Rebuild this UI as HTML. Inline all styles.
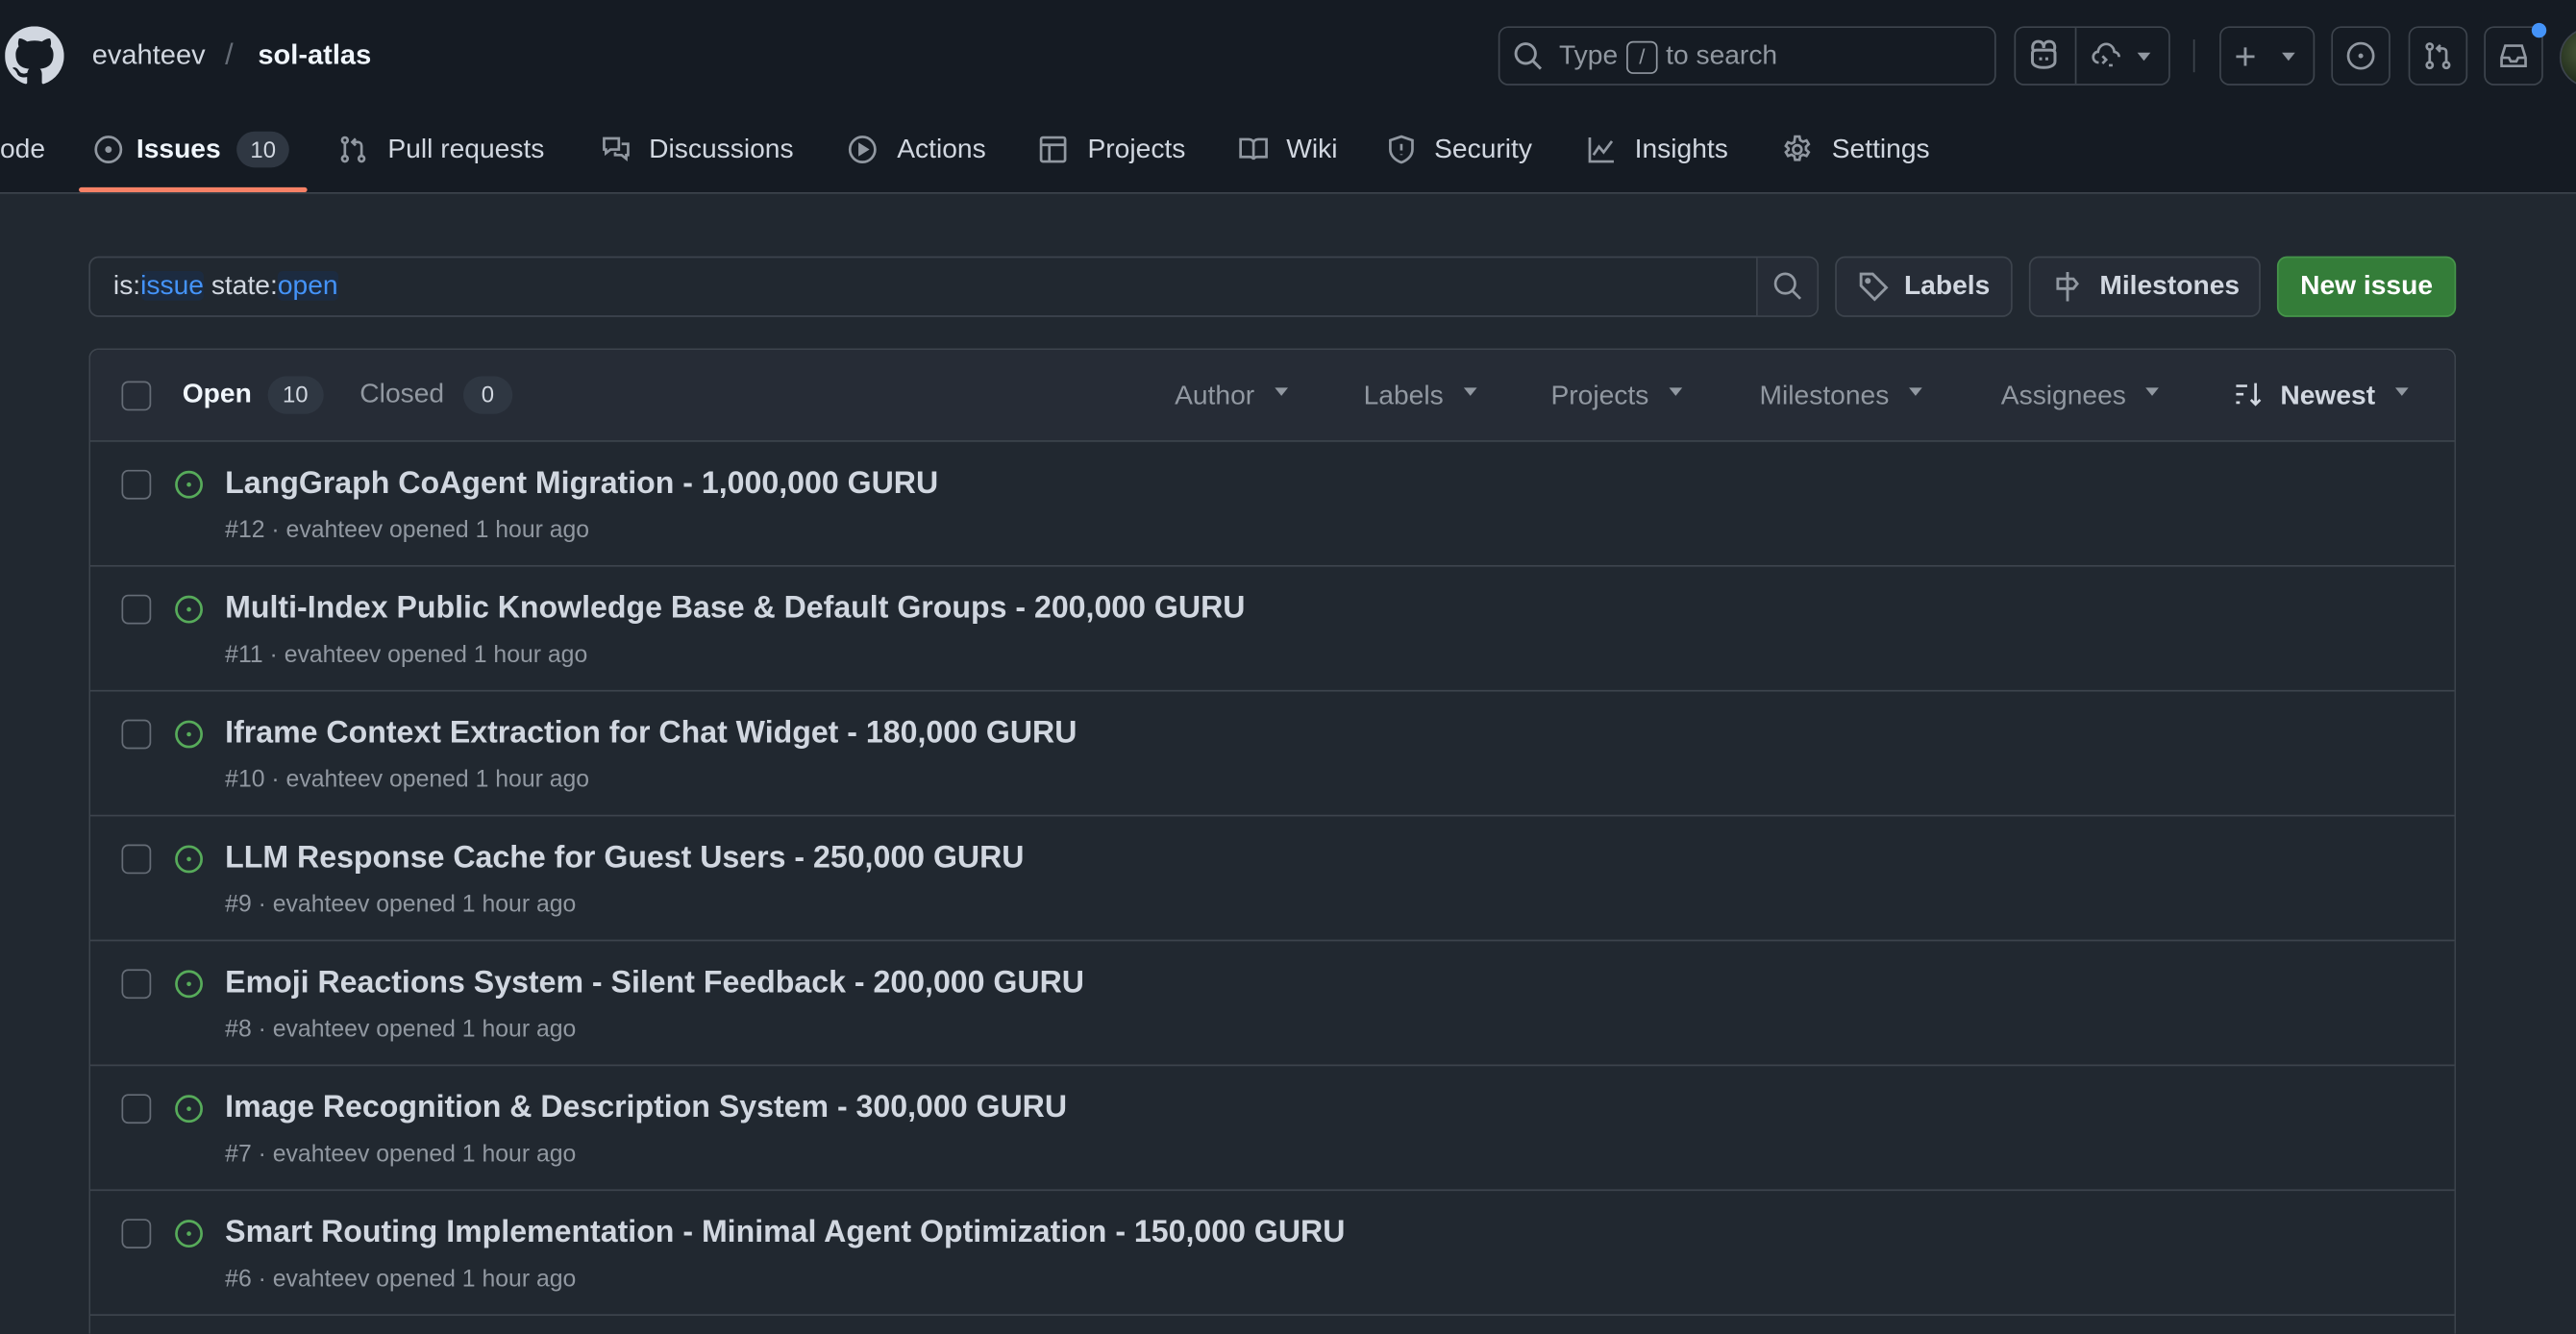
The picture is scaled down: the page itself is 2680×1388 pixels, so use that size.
<!DOCTYPE html>
<html><head><meta charset="utf-8"><style>
*{box-sizing:border-box;margin:0;padding:0}
html,body{width:2680px;height:1388px;overflow:hidden;background:#212830}
#w{position:absolute;left:0;top:0;width:1568px;height:812px;overflow:hidden;transform:scale(1.70918);transform-origin:0 0;font-family:"Liberation Sans",sans-serif;color:#d1d7e0;background:#212830}
.a{position:absolute}
svg{display:block}
.hdr{position:absolute;left:0;top:0;width:1568px;height:118px;background:#151b23;border-bottom:1px solid #3d444d}
.btn{position:absolute;border:1px solid #3d444d;border-radius:6px}
.tab{position:absolute;top:79px;height:24px;font-size:16.5px;line-height:24px;color:#d1d7e0;display:flex;align-items:center;gap:8px}
.tab svg{stroke:#9198a1;fill:none;stroke-width:1.4}
.dd{position:absolute;top:230px;font-size:16.5px;color:#9198a1;line-height:22px}
.dd:after{content:"";display:inline-block;margin-left:12px;border:4.5px solid transparent;border-top:5px solid #9198a1;vertical-align:1px}
.row{position:absolute;left:55px;width:1439px;height:76px;border-top:1px solid #3d444d}
.cb{position:absolute;left:19px;width:18px;height:18px;border:1.3px solid #656c76;border-radius:4px}
.row .cb{top:17px}
.row .ic{position:absolute;left:51px;top:17px}
.row .t{position:absolute;left:82px;top:14px;font-size:18.8px;font-weight:bold;color:#d1d7e0;white-space:nowrap}
.row .m{position:absolute;left:82px;top:46px;font-size:14.5px;color:#9198a1;white-space:nowrap}
</style></head><body><div id="w">
<div class="hdr"></div>
<svg class="a" style="left:3px;top:16px" width="36" height="36" viewBox="0 0 16 16"><path fill="#d1d7e0" d="M8 0C3.58 0 0 3.58 0 8c0 3.54 2.29 6.53 5.47 7.59.4.07.55-.17.55-.38 0-.19-.01-.82-.01-1.49-2.01.37-2.53-.49-2.69-.94-.09-.23-.48-.94-.82-1.13-.28-.15-.68-.52-.01-.53.63-.01 1.08.58 1.23.82.72 1.21 1.870.87 2.33.66.07-.52.28-.87.51-1.07-1.78-.2-3.64-.89-3.64-3.95 0-.87.31-1.59.82-2.15-.08-.2-.36-1.020.08-2.12 0 0 .67-.21 2.2.82.64-.18 1.32-.27 2-.27.68 0 1.36.09 2 .27 1.53-1.04 2.2-.82 2.2-.82.44 1.1.16 1.92.08 2.12.51.56.82 1.27.82 2.15 0 3.07-1.87 3.75-3.65 3.95.29.25.54.73.54 1.48 0 1.07-.01 1.93-.01 2.2 0 .21.15.46.55.38A8.013 8.013 0 0016 8c0-4.42-3.58-8-8-8z"/></svg>
<div class="a" style="left:56px;top:24px;font-size:17px;color:#d1d7e0">evahteev</div>
<div class="a" style="left:137px;top:23px;font-size:18px;color:#656c76">/</div>
<div class="a" style="left:157px;top:24px;font-size:17px;font-weight:bold;color:#f0f6fc">sol-atlas</div>
<div class="btn" style="left:912px;top:16px;width:303px;height:36px;background:#151b23"></div>
<svg class="a" style="left:921px;top:25px" width="18" height="18" viewBox="0 0 16 16" fill="none" stroke="#9198a1" stroke-width="1.5"><circle cx="6.8" cy="6.8" r="5.3"/><path d="M10.7 10.7L15 15"/></svg>
<div class="a" style="left:949px;top:25px;font-size:16.5px;color:#9198a1">Type</div>
<div class="a" style="left:990px;top:25px;width:19px;height:20px;border:1px solid #9198a1;border-radius:4px;font-size:13px;color:#9198a1;text-align:center;line-height:18px">/</div>
<div class="a" style="left:1014px;top:25px;font-size:16.5px;color:#9198a1">to search</div>
<div class="btn" style="left:1226px;top:16px;width:95px;height:36px"></div>
<div class="a" style="left:1263px;top:17px;width:1px;height:34px;background:#3d444d"></div>
<svg class="a" style="left:1234px;top:23px" width="20" height="20" viewBox="0 0 16 16" fill="none" stroke="#9198a1" stroke-width="1.4"><path d="M3 6.5C2 4 3 1.8 5.3 1.8S8 3.5 8 5c0-1.5.4-3.2 2.7-3.2S14 4 13 6.5M2.5 7.5v4c0 2 2.5 3 5.5 3s5.5-1 5.5-3v-4c0-1-1-1.5-2-1.5H4.5c-1 0-2 .5-2 1.5z"/><path d="M6.5 9.5v1.5M9.5 9.5v1.5"/></svg>
<svg class="a" style="left:1272px;top:24px" width="20" height="18" viewBox="0 0 16 16" fill="none" stroke="#9198a1" stroke-width="1.4"><path d="M4 12.5C2 12.5 1 11 1 9.5S2.2 6.7 3.6 6.7C4 4 6 2.5 8 2.5c2.5 0 4.2 2 4.4 4.2 1.5.2 2.6 1.3 2.6 2.8"/><path d="M6 9l2 2-2 2M9.5 14h2"/></svg>
<div class="a" style="left:1301px;top:32px;border:4.5px solid transparent;border-top:5px solid #9198a1"></div>
<div class="a" style="left:1335px;top:24px;width:1px;height:20px;background:#3d444d"></div>
<div class="btn" style="left:1351px;top:16px;width:58px;height:36px"></div>
<div class="a" style="left:1360px;top:21px;font-size:23px;color:#9198a1;line-height:26px">+</div>
<div class="a" style="left:1389px;top:32px;border:4.5px solid transparent;border-top:5px solid #9198a1"></div>
<div class="btn" style="left:1419px;top:16px;width:36px;height:36px"></div>
<svg class="a" style="left:1428px;top:25px" width="18" height="18" viewBox="0 0 16 16"><circle cx="8" cy="8" r="6.8" fill="none" stroke="#9198a1" stroke-width="1.4"/><circle cx="8" cy="8" r="1.3" fill="#9198a1"/></svg>
<div class="btn" style="left:1466px;top:16px;width:36px;height:36px"></div>
<svg class="a" style="left:1475px;top:25px" width="18" height="18" viewBox="0 0 16 16" fill="none" stroke="#9198a1" stroke-width="1.4"><circle cx="3.5" cy="3" r="1.6"/><circle cx="3.5" cy="13" r="1.6"/><circle cx="12.5" cy="13" r="1.6"/><path d="M3.5 4.6v6.8M12.5 11.4V6c0-1.2-.8-2-2-2H7.5M9.3 2.2L7.5 4l1.8 1.8"/></svg>
<div class="btn" style="left:1512px;top:16px;width:36px;height:36px"></div>
<svg class="a" style="left:1521px;top:25px" width="18" height="18" viewBox="0 0 16 16" fill="none" stroke="#9198a1" stroke-width="1.4"><path d="M1.5 9l2-6.5h9l2 6.5v4.5h-13zM1.5 9h4l1 2h3l1-2h4"/></svg>
<div class="a" style="left:1541px;top:14px;width:9px;height:9px;border-radius:50%;background:#4493f8"></div>
<div class="a" style="left:1558px;top:17px;width:36px;height:36px;border-radius:50%;background:radial-gradient(circle at 40% 40%,#4a5a3a,#1e2a1a 70%);border:1px solid #3d444d"></div>
<div class="tab" style="left:0">ode</div>
<div class="tab" style="left:57px"><svg width="18" height="18" viewBox="0 0 16 16"><circle cx="8" cy="8" r="6.8"/><circle cx="8" cy="8" r="1.1" fill="#9198a1"/></svg><b style="color:#f0f6fc;font-weight:bold">Issues</b><span style="display:inline-block;background:#2f3742;border-radius:12px;padding:0 8px;font-size:14px;line-height:22px;margin-left:2px">10</span></div>
<div class="a" style="left:48px;top:114px;width:139px;height:3px;border-radius:2px;background:#f78166"></div>
<div class="tab" style="left:206px"><svg width="18" height="18" viewBox="0 0 16 16"><circle cx="3.5" cy="3" r="1.5"/><circle cx="3.5" cy="13" r="1.5"/><circle cx="12.5" cy="13" r="1.5"/><path d="M3.5 4.5v7M12.5 11.5V6c0-1.2-.8-2-2-2H7.5M9.3 2.2L7.5 4l1.8 1.8"/></svg><span style="margin-left:4px">Pull requests</span></div>
<div class="tab" style="left:365px"><svg width="20" height="18" viewBox="0 0 16 16"><path d="M1.5 2h8v6H5L2.5 10V8h-1zM11 5h3.5v6h-1v2L11 11H7.5V9.5"/></svg><span style="margin-left:2px">Discussions</span></div>
<div class="tab" style="left:516px"><svg width="18" height="18" viewBox="0 0 16 16"><circle cx="8" cy="8" r="6.8"/><path d="M6.5 5.5v5l4-2.5z" fill="#9198a1"/></svg><span style="margin-left:4px">Actions</span></div>
<div class="tab" style="left:632px"><svg width="18" height="18" viewBox="0 0 16 16"><rect x="1.5" y="1.5" width="13" height="13" rx="1"/><path d="M1.5 5.5h13M6 5.5v9"/></svg><span style="margin-left:4px">Projects</span></div>
<div class="tab" style="left:753px"><svg width="20" height="18" viewBox="0 0 16 16"><path d="M1 2.5h4.5c1.3 0 2.5.8 2.5 2v9c0-.8-1-1.5-2-1.5H1zM15 2.5h-4.5C9.2 2.5 8 3.3 8 4.5v9c0-.8 1-1.5 2-1.5h5z"/></svg><span style="margin-left:2px">Wiki</span></div>
<div class="tab" style="left:844px"><svg width="18" height="18" viewBox="0 0 16 16"><path d="M8 1l6 2v5c0 3.5-3 6-6 7-3-1-6-3.5-6-7V3z"/><path d="M8 5v3.5M8 10.5v.5"/></svg><span style="margin-left:3px">Security</span></div>
<div class="tab" style="left:965px"><svg width="20" height="18" viewBox="0 0 16 16"><path d="M1.5 1.5v13h13M3.5 11l3-4.5 2.5 3 4.5-6"/></svg><span style="margin-left:2px">Insights</span></div>
<div class="tab" style="left:1085px"><svg width="18" height="18" viewBox="0 0 16 16"><circle cx="8" cy="8" r="2.3"/><path d="M6.8 1h2.4l.4 2 1.5.8 1.9-.7 1.2 2-1.5 1.4v1.6l1.5 1.4-1.2 2-1.9-.7-1.5.8-.4 2H6.8l-.4-2-1.5-.8-1.9.7-1.2-2 1.5-1.4V7.5L1.8 6.1l1.2-2 1.9.7 1.5-.8z"/></svg><span style="margin-left:4px">Settings</span></div>
<div class="btn" style="left:54px;top:156px;width:1053px;height:37px;background:#212830"></div>
<div class="a" style="left:1069px;top:157px;width:1px;height:35px;background:#3d444d"></div>
<div class="a" style="left:1070px;top:157px;width:36px;height:35px;background:#262c36;border-radius:0 6px 6px 0"></div>
<svg class="a" style="left:1079px;top:165px" width="18" height="18" viewBox="0 0 16 16" fill="none" stroke="#9198a1" stroke-width="1.4"><circle cx="6.8" cy="6.8" r="5.3"/><path d="M10.7 10.7L15 15"/></svg>
<div class="a" style="left:69px;top:165px;font-size:16.5px;color:#d1d7e0;white-space:nowrap">is:<span style="color:#4493f8;background:#1c2b40;border-radius:3px">issue</span> state:<span style="color:#4493f8;background:#1c2b40;border-radius:3px">open</span></div>
<div class="btn" style="left:1117px;top:156px;width:108px;height:37px;background:#262c36"></div>
<svg class="a" style="left:1131px;top:165px" width="19" height="19" viewBox="0 0 16 16" fill="none" stroke="#9198a1" stroke-width="1.4"><path d="M1.5 1.5h6l7 7-6 6-7-7z"/><circle cx="5" cy="5" r=".8" fill="#9198a1"/></svg>
<div class="a" style="left:1159px;top:165px;font-size:16.5px;font-weight:bold;color:#d1d7e0">Labels</div>
<div class="btn" style="left:1235px;top:156px;width:141px;height:37px;background:#262c36"></div>
<svg class="a" style="left:1249px;top:165px" width="19" height="19" viewBox="0 0 16 16" fill="none" stroke="#9198a1" stroke-width="1.4"><path d="M8 .5v15M3 4h8l2 2.5-2 2.5H3z"/></svg>
<div class="a" style="left:1278px;top:165px;font-size:16.5px;font-weight:bold;color:#d1d7e0">Milestones</div>
<div class="a" style="left:1386px;top:156px;width:109px;height:37px;background:#347d39;border:1px solid #46954a;border-radius:6px;color:#fff;font-size:16.5px;font-weight:bold;text-align:center;line-height:35px">New issue</div>
<div class="a" style="left:54px;top:212px;width:1441px;height:600px;border:1px solid #3d444d;border-bottom:none;border-radius:6px 6px 0 0;background:#212830"></div>
<div class="a" style="left:55px;top:213px;width:1439px;height:55px;background:#262c36;border-radius:6px 6px 0 0"></div>
<div class="cb" style="left:74px;top:232px"></div>
<div class="a" style="left:111px;top:231px;font-size:16.5px;font-weight:bold;color:#f0f6fc">Open</div>
<div class="a" style="left:163px;top:229px;height:23px;padding:0 9px;background:#2f3742;border-radius:12px;font-size:14px;line-height:23px;color:#d1d7e0">10</div>
<div class="a" style="left:219px;top:231px;font-size:16.5px;color:#9198a1">Closed</div>
<div class="a" style="left:282px;top:229px;height:23px;padding:0 11px;background:#2f3742;border-radius:12px;font-size:14px;line-height:23px;color:#d1d7e0">0</div>
<div class="dd" style="left:715px">Author</div>
<div class="dd" style="left:830px">Labels</div>
<div class="dd" style="left:944px">Projects</div>
<div class="dd" style="left:1071px">Milestones</div>
<div class="dd" style="left:1218px">Assignees</div>
<svg class="a" style="left:1359px;top:231px" width="20" height="18" viewBox="0 0 16 16" fill="none" stroke="#d1d7e0" stroke-width="1.4"><path d="M1 3.5h6M1 8h4M1 12.5h2M11.5 2v11.5M9 11l2.5 2.5L14 11"/></svg>
<div class="dd" style="left:1388px;color:#d1d7e0;font-weight:bold">Newest</div>

<div class="row" style="top:268px"><div class="cb"></div><svg class="ic" width="18" height="18" viewBox="0 0 16 16"><circle cx="8" cy="8" r="6.8" fill="none" stroke="#57ab5a" stroke-width="1.4"/><circle cx="8" cy="8" r="1.2" fill="#57ab5a"/></svg><div class="t">LangGraph CoAgent Migration - 1,000,000 GURU</div><div class="m">#12 · evahteev opened 1 hour ago</div></div>
<div class="row" style="top:344px"><div class="cb"></div><svg class="ic" width="18" height="18" viewBox="0 0 16 16"><circle cx="8" cy="8" r="6.8" fill="none" stroke="#57ab5a" stroke-width="1.4"/><circle cx="8" cy="8" r="1.2" fill="#57ab5a"/></svg><div class="t">Multi-Index Public Knowledge Base &amp; Default Groups - 200,000 GURU</div><div class="m">#11 · evahteev opened 1 hour ago</div></div>
<div class="row" style="top:420px"><div class="cb"></div><svg class="ic" width="18" height="18" viewBox="0 0 16 16"><circle cx="8" cy="8" r="6.8" fill="none" stroke="#57ab5a" stroke-width="1.4"/><circle cx="8" cy="8" r="1.2" fill="#57ab5a"/></svg><div class="t">Iframe Context Extraction for Chat Widget - 180,000 GURU</div><div class="m">#10 · evahteev opened 1 hour ago</div></div>
<div class="row" style="top:496px"><div class="cb"></div><svg class="ic" width="18" height="18" viewBox="0 0 16 16"><circle cx="8" cy="8" r="6.8" fill="none" stroke="#57ab5a" stroke-width="1.4"/><circle cx="8" cy="8" r="1.2" fill="#57ab5a"/></svg><div class="t">LLM Response Cache for Guest Users - 250,000 GURU</div><div class="m">#9 · evahteev opened 1 hour ago</div></div>
<div class="row" style="top:572px"><div class="cb"></div><svg class="ic" width="18" height="18" viewBox="0 0 16 16"><circle cx="8" cy="8" r="6.8" fill="none" stroke="#57ab5a" stroke-width="1.4"/><circle cx="8" cy="8" r="1.2" fill="#57ab5a"/></svg><div class="t">Emoji Reactions System - Silent Feedback - 200,000 GURU</div><div class="m">#8 · evahteev opened 1 hour ago</div></div>
<div class="row" style="top:648px"><div class="cb"></div><svg class="ic" width="18" height="18" viewBox="0 0 16 16"><circle cx="8" cy="8" r="6.8" fill="none" stroke="#57ab5a" stroke-width="1.4"/><circle cx="8" cy="8" r="1.2" fill="#57ab5a"/></svg><div class="t">Image Recognition &amp; Description System - 300,000 GURU</div><div class="m">#7 · evahteev opened 1 hour ago</div></div>
<div class="row" style="top:724px;height:76px"><div class="cb"></div><svg class="ic" width="18" height="18" viewBox="0 0 16 16"><circle cx="8" cy="8" r="6.8" fill="none" stroke="#57ab5a" stroke-width="1.4"/><circle cx="8" cy="8" r="1.2" fill="#57ab5a"/></svg><div class="t">Smart Routing Implementation - Minimal Agent Optimization - 150,000 GURU</div><div class="m">#6 · evahteev opened 1 hour ago</div></div>
<div class="row" style="top:800px;height:12px"></div>
</div></body></html>
